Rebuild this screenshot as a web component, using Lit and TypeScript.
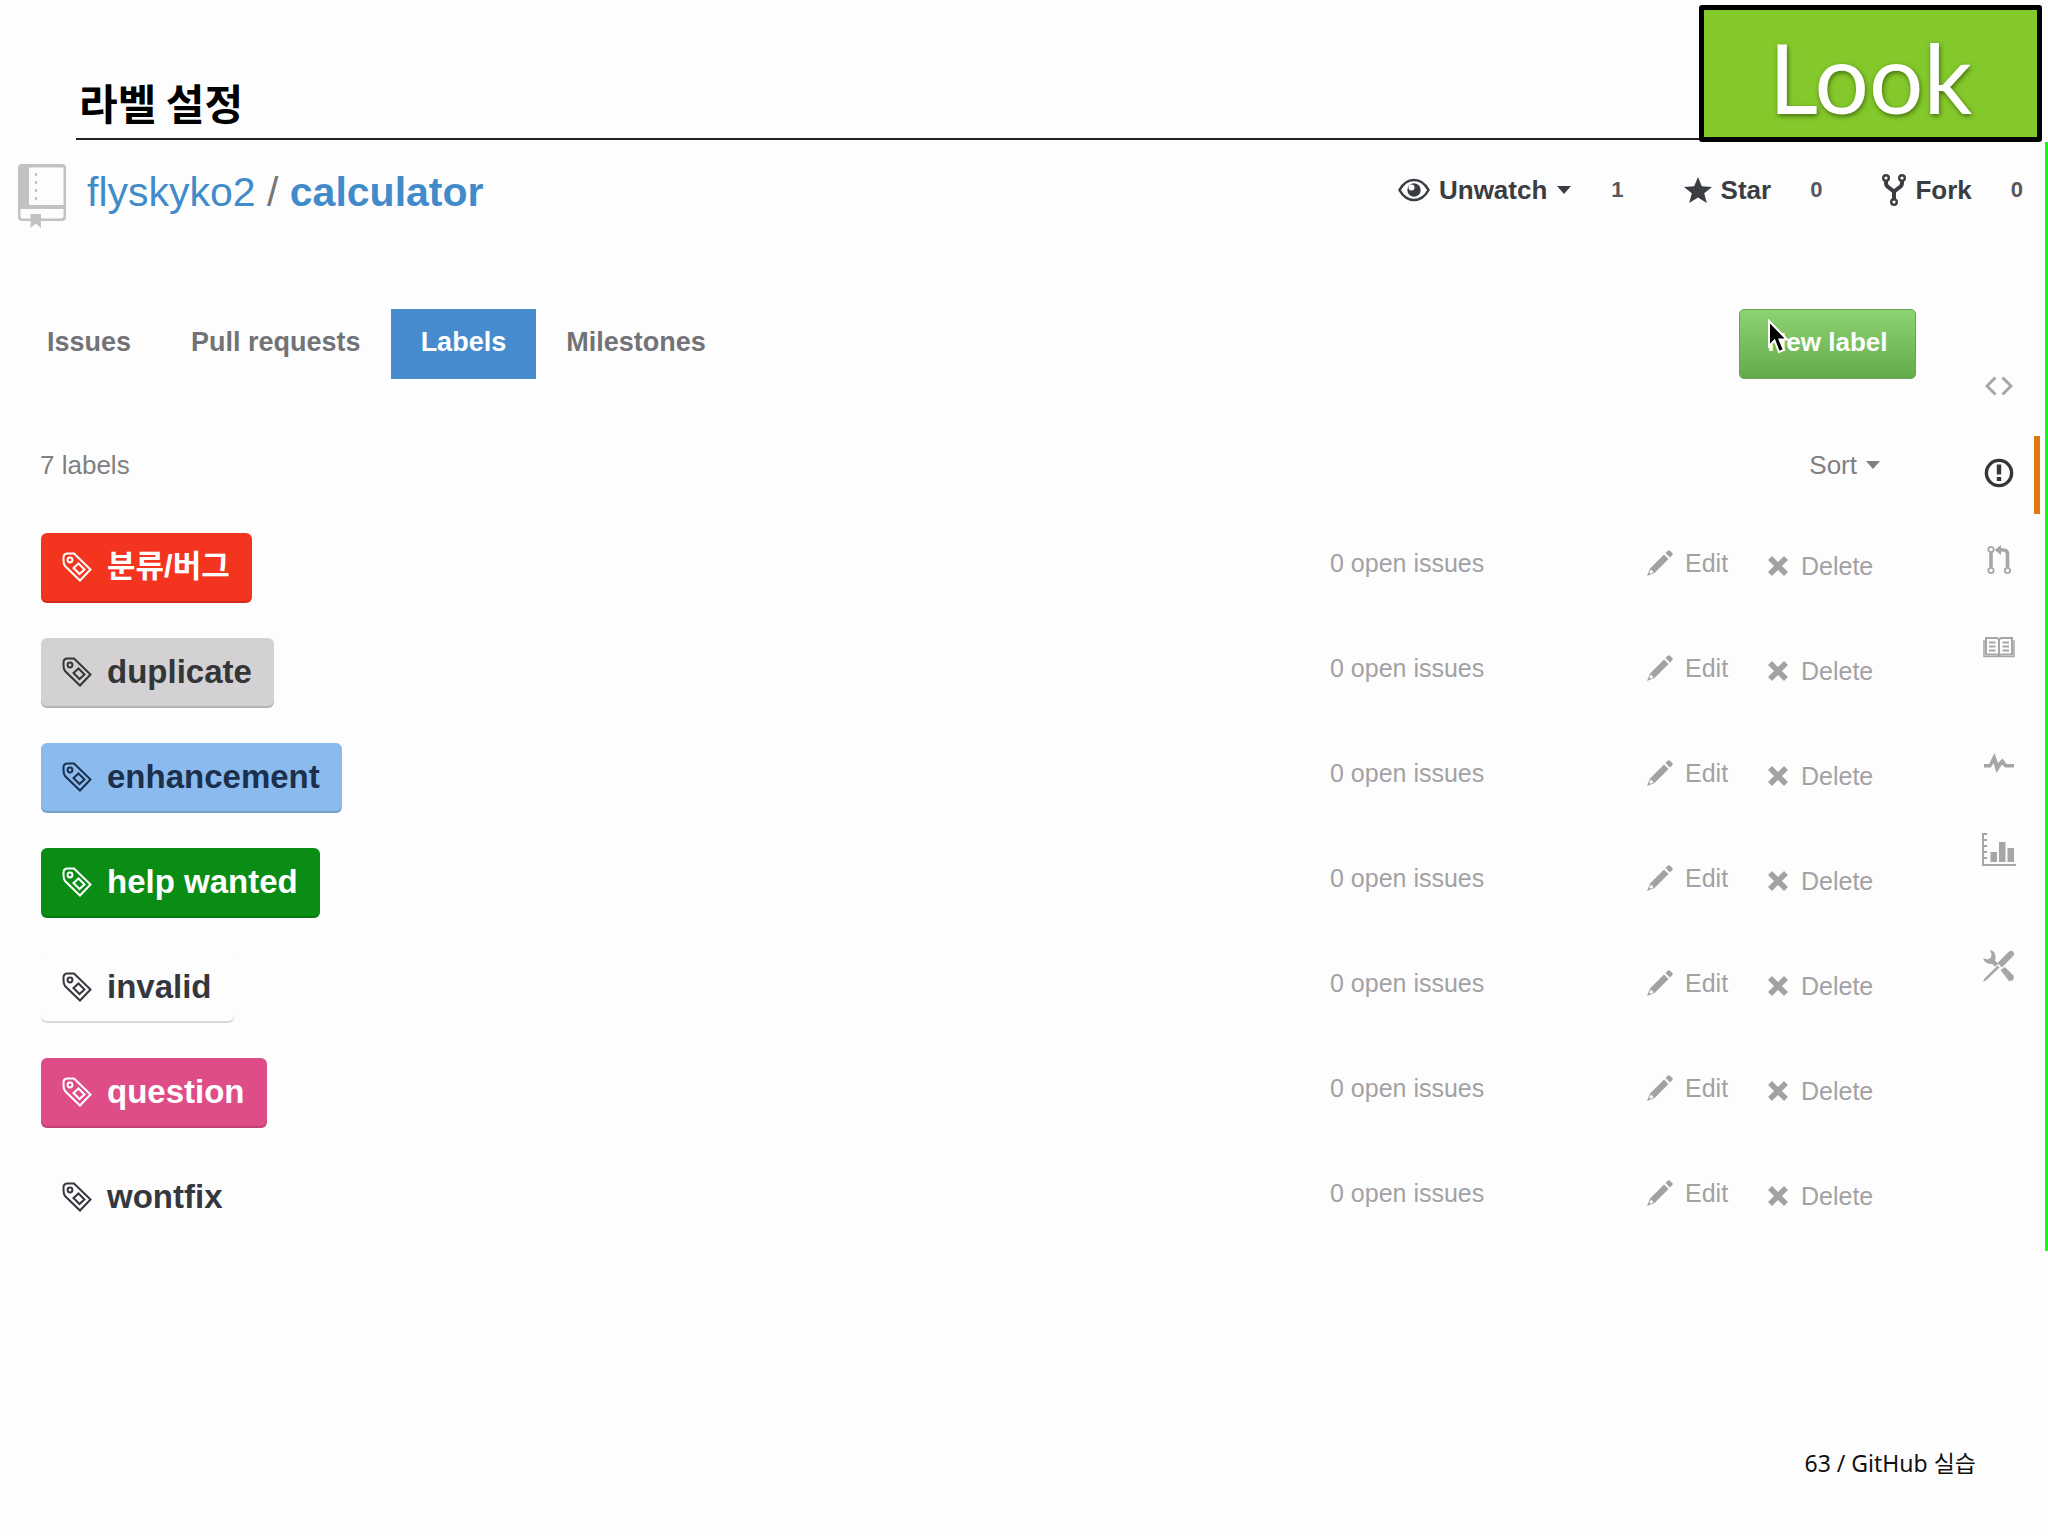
import { LitElement, html, css, svg } from "lit";
import { customElement, property } from "lit/decorators.js";
import { classMap } from "lit/directives/class-map.js";

interface Label {
  name: string;
  tone: string;
  open: number;
}

const LABELS: Label[] = [
  { name: "분류/버그", tone: "red", open: 0 },
  { name: "duplicate", tone: "gray", open: 0 },
  { name: "enhancement", tone: "blue", open: 0 },
  { name: "help wanted", tone: "green", open: 0 },
  { name: "invalid", tone: "plain", open: 0 },
  { name: "question", tone: "pink", open: 0 },
  { name: "wontfix", tone: "white", open: 0 },
];

const TABS = ["Issues", "Pull requests", "Labels", "Milestones"];

const ICONS: Record<string, { w: number; h: number; body: unknown }> = {
  repo: {
    w: 48, h: 66,
    body: svg`<path fill-rule="evenodd" fill="currentColor" d="M4 1H44Q48 1 48 5V54Q48 58 44 58H23V65L18 60.500L12.500 65V58H4Q0 58 0 54V5Q0 1 4 1ZM11 4.500V42H45.500V4.500ZM2.500 46V53Q2.500 55.500 5 55.500H12.500V51H23V55.500H43Q45.500 55.500 45.500 53V46Z"/>
      <path fill="currentColor" d="M17 10h2v3h-2zM17 18h2v3h-2zM17 26h2v3h-2zM17 34h2v3h-2z"/>`,
  },
  eye: {
    w: 32, h: 24,
    body: svg`<path d="M1.500 12C5 5.500 10 2 16 2S27 5.500 30.500 12C27 18.500 22 22 16 22S5 18.500 1.500 12Z" fill="none" stroke="currentColor" stroke-width="2.600"/>
      <circle cx="16" cy="12" r="6.700" fill="currentColor"/><circle cx="13.500" cy="9.500" r="3" fill="#fefdfe"/>`,
  },
  star: {
    w: 28, h: 26,
    body: svg`<path fill="currentColor" d="M14 0L17.800 9.300L28 10L20.200 16.300L22.800 26L14 20.600L5.200 26L7.800 16.300L0 10L10.200 9.300Z"/>`,
  },
  fork: {
    w: 24, h: 34,
    body: svg`<g fill="none" stroke="currentColor"><g stroke-width="2.400"><circle cx="4" cy="5" r="2.800"/><circle cx="20" cy="5" r="2.800"/><circle cx="12" cy="29" r="2.800"/></g>
      <path stroke-width="4" d="M4 7.500V10.500Q4 12 5.500 13.500L12 18.500L18.500 13.500Q20 12 20 10.500V7.500M12 17.500V26"/></g>`,
  },
  tag: {
    w: 30, h: 30,
    body: svg`<g fill="none" stroke="currentColor" stroke-width="2"><path d="M1.500 8V5.500Q1.500 2 5 1.500L12 1.500L28.500 17.500L18 28.500L3 14Q1.500 12 1.500 8Z"/>
      <circle cx="8" cy="8" r="2.400"/><path d="M16.500 11.500L22.500 17.500L17.500 22L11.500 16Z"/></g>`,
  },
  pencil: {
    w: 26, h: 26,
    body: svg`<path fill="currentColor" d="M17 4.500L21.500 9L7.500 23L0 26L3 18.500ZM18.500 3L21 .500Q22 -.300 23 .700L25.300 3Q26.300 4 25.300 5L23 7.500Z"/><path fill="#fefdfe" d="M4 19.500L6.700 22.200L3.500 23.700L2.300 22.500Z"/>`,
  },
  cross: {
    w: 20, h: 20,
    body: svg`<path stroke="currentColor" stroke-width="5.600" d="M2 2L18 18M18 2L2 18"/>`,
  },
  caret: { w: 16, h: 8, body: svg`<path fill="currentColor" d="M1 0H15L8 8Z"/>` },
  code: {
    w: 28, h: 20,
    body: svg`<path fill="none" stroke="currentColor" stroke-width="3" d="M10.500 1.500L2 10L10.500 18.500M17.500 1.500L26 10L17.500 18.500"/>`,
  },
  issue: {
    w: 30, h: 30,
    body: svg`<circle cx="15" cy="15" r="12.600" fill="none" stroke="currentColor" stroke-width="3.400"/><path fill="currentColor" d="M12.800 6.500h4.400v10h-4.400zM12.800 19h4.400v4h-4.400z"/>`,
  },
  pull: {
    w: 24, h: 30,
    body: svg`<g fill="none" stroke="currentColor"><g stroke-width="1.800"><circle cx="4" cy="4.500" r="2.700"/><circle cx="4" cy="25.500" r="2.700"/><circle cx="20.500" cy="25.500" r="2.700"/></g>
      <path stroke-width="3.600" d="M4 7.500V22.500M20.500 22.500V9Q20.500 5 16.500 5H13"/></g><path fill="currentColor" d="M7.500 5L14 0V10Z"/>`,
  },
  book: {
    w: 32, h: 22,
    body: svg`<g fill="none" stroke="currentColor"><path stroke-width="2" d="M3 2H14L16 3.500L18 2H29V18.500H18L16 20L14 18.500H3ZM16 3V20"/><path stroke-width="1.500" d="M1 4V20.500H31V4"/>
      <path stroke-width="2" d="M6 6.500H12.500M6 10.500H12.500M6 14.500H12.500M19.500 6.500H26M19.500 10.500H26M19.500 14.500H26"/></g>`,
  },
  pulse: {
    w: 30, h: 20,
    body: svg`<path fill="currentColor" d="M0 11H5L10.500 0L14 10L18.500 5.500L22.500 11H30V14.500H21L18 11.500L12.500 20L9.500 10L7 14.500H0Z"/>`,
  },
  graph: {
    w: 34, h: 34,
    body: svg`<path fill="currentColor" d="M0 0H5V2H2V6H5V8H2V12H5V14H2V18H5V20H2V24H5V26H2V31H34V33H0ZM8.500 19h6.500v10h-6.500zM17 9h6.500v20h-6.500zM25.500 15h6.500v14h-6.500z"/>`,
  },
  tools: {
    w: 32, h: 32,
    body: svg`<path fill="currentColor" d="M7 0Q12.500 1 12.500 7Q12.500 9 12 10.500L15.500 14L11.500 16.500L9.500 14Q2 14.500 0 8L5 9.500L8 7.500L8.500 4ZM17.500 20L22 17L30.500 25.500Q31.500 27.500 30 30Q27.500 31.500 25.500 30.500Z"/>
      <path fill="currentColor" d="M26 1.500Q28 0 30 1.500Q31.800 3.500 30.500 5.500L19 17.500L14.500 13ZM14.500 15.500L16.500 17.500L3.500 30L0 32L1.500 28.500Z"/>`,
  },
  pointer: {
    w: 22, h: 36,
    body: svg`<path fill="#000" stroke="#fff" stroke-width="2" d="M2 2V27L7.500 21.500L12 33L17 31L12.500 20.500H20Z"/>`,
  },
};

@customElement("app-icon")
export class AppIcon extends LitElement {
  @property() name = "";

  static styles = css`
    :host { display: inline-flex; flex: none; }
    svg { display: block; }
  `;

  render() {
    const icon = ICONS[this.name];
    if (!icon) return html``;
    return html`<svg width=${icon.w} height=${icon.h} viewBox="0 0 ${icon.w} ${icon.h}" aria-hidden="true">${icon.body}</svg>`;
  }
}

@customElement("label-row")
export class LabelRow extends LitElement {
  @property({ attribute: false }) label!: Label;

  static styles = css`
    :host {
      display: grid;
      grid-template-columns: 1fr 317px 121px 102px;
      align-items: start;
      font: 25px/30px "Liberation Sans", Arial, sans-serif;
      color: #a2a2a4;
    }
    .chip {
      justify-self: start;
      display: flex;
      align-items: center;
      gap: 15px;
      height: 70px;
      box-sizing: border-box;
      padding: 0 22px 2px 21px;
      border-radius: 6px;
      box-shadow: inset 0 -2px 0 rgba(0, 0, 0, 0.14);
      font: bold 33px/40px "Liberation Sans", "Noto Sans CJK KR", sans-serif;
      text-decoration: none;
      color: #34383e;
    }
    .red, .green, .pink { color: #fff; }
    .red { background: #f33520; font-size: 31px; }
    .gray { background: #d3d1d3; color: #333537; }
    .blue { background: #8abaee; color: #1c2f4c; }
    .green { background: #0a8d14; }
    .pink { background: #df4d88; }
    .white { box-shadow: none; }
    .count, .action { margin-top: 15px; color: inherit; text-decoration: none; }
    .action {
      display: flex;
      align-items: center;
      padding: 0;
      border: 0;
      background: none;
      font: inherit;
      cursor: pointer;
    }
    .edit { gap: 12px; }
    .delete { gap: 13px; margin-top: 18px; }
  `;

  render() {
    const { name, tone, open } = this.label;
    return html`
      <a class=${classMap({ chip: true, [tone]: true })} href="#"><app-icon name="tag"></app-icon><span>${name}</span></a>
      <a class="count" href="#">${open} open issues</a>
      <button class="action edit"><app-icon name="pencil"></app-icon>Edit</button>
      <button class="action delete"><app-icon name="cross"></app-icon>Delete</button>
    `;
  }
}

@customElement("app-root")
export class AppRoot extends LitElement {
  static styles = css`
    :host {
      display: block;
      min-height: 100vh;
      background: #fefdfe;
      color: #3a3d42;
      font-family: "Liberation Sans", Arial, "Noto Sans CJK KR", sans-serif;
    }
    a { color: inherit; text-decoration: none; }
    button { font: inherit; color: inherit; border: 0; padding: 0; background: none; cursor: pointer; }
    .page { display: flex; flex-direction: column; min-height: 100vh; }
    .top { display: flex; align-items: flex-end; padding: 5px 6px 0 76px; }
    .heading {
      flex: 1;
      margin: 0 0 2px;
      padding: 0 0 6px 3px;
      border-bottom: 2px solid #222;
      font: bold 42px/60px "Noto Sans CJK KR", sans-serif;
      color: #000;
    }
    .look {
      box-sizing: border-box;
      width: 343px;
      height: 137px;
      border: 5px solid #000;
      border-radius: 3px;
      background: #84c92b;
      color: #fff;
      font: 96px/134px Lato, sans-serif;
      text-align: center;
      text-shadow: 1px 2px 5px rgba(40, 70, 0, 0.7);
    }
    .shot {
      display: grid;
      grid-template-columns: 1fr 97px;
      grid-template-rows: 167px auto;
      padding-bottom: 18px;
      border-right: 3px solid #10fb18;
    }
    .repo { grid-column: 1 / -1; display: flex; align-items: flex-start; padding: 21px 22px 0 18px; }
    .book { color: #c2c2c3; }
    .path { flex: 1; margin: 3px 0 0 21px; font-size: 41px; line-height: 52px; font-weight: normal; color: #777; }
    .path a { color: #428bca; }
    .path .name { font-weight: bold; }
    .social { display: flex; gap: 60px; padding-top: 9px; }
    .pair { display: flex; align-items: center; height: 36px; }
    .act { display: flex; align-items: center; gap: 9px; font-weight: bold; font-size: 26px; line-height: 36px; }
    .num { margin-left: 39px; font-size: 22px; line-height: 32px; font-weight: bold; color: #55585c; }
    .main { padding-left: 17px; }
    .tabs { display: flex; align-items: center; margin-right: 32px; }
    .tab { padding: 0 30px; font-weight: bold; font-size: 27px; line-height: 66px; height: 70px; color: #727376; }
    .current { background: #458bcd; color: #fff; }
    .new {
      position: relative;
      width: 177px;
      height: 70px;
      margin-left: auto;
      padding: 0 0 4px;
      border: 1px solid #6ba356;
      border-radius: 5px;
      background: linear-gradient(#8dd372, #65aa4b);
      color: #fff;
      font-weight: bold;
      font-size: 26px;
    }
    .pointer { position: absolute; left: 27px; top: 9px; }
    .summary {
      display: flex;
      justify-content: space-between;
      padding: 71px 67px 0 23px;
      font-size: 26px;
      line-height: 30px;
      color: #808083;
    }
    .sort { display: flex; align-items: center; gap: 8px; }
    .list { display: grid; gap: 35px; margin: 53px 78px 0 24px; }
    .rail { display: flex; flex-direction: column; margin-right: 5px; padding-top: 40px; color: #a6a6a8; }
    .side {
      display: flex;
      align-items: center;
      justify-content: center;
      box-sizing: border-box;
      height: 78px;
      margin-bottom: 9px;
      padding: 0 0 5px 10px;
    }
    .active { color: #34363a; border-right: 6px solid #df7a12; padding-left: 16px; }
    .last { margin-bottom: 38px; }
    .foot { margin-top: auto; padding: 0 72px 57px; text-align: right; font: 23px/32px "Noto Sans", "Noto Sans CJK KR", sans-serif; color: #111; }
  `;

  private side(name: string, title: string, kind = "") {
    return html`<a class=${classMap({ side: true, active: kind === "active", last: kind === "last" })} href="#" aria-label=${title}><app-icon name=${name}></app-icon></a>`;
  }

  render() {
    return html`
      <div class="page">
        <header class="top">
          <h1 class="heading">라벨 설정</h1>
          <div class="look">Look</div>
        </header>
        <section class="shot">
          <div class="repo">
            <app-icon class="book" name="repo"></app-icon>
            <h2 class="path"><a href="#">flyskyko2</a> / <a class="name" href="#">calculator</a></h2>
            <div class="social">
              <div class="pair"><button class="act"><app-icon name="eye"></app-icon>Unwatch<app-icon name="caret"></app-icon></button><a class="num" href="#">1</a></div>
              <div class="pair"><button class="act"><app-icon name="star"></app-icon>Star</button><a class="num" href="#">0</a></div>
              <div class="pair"><button class="act"><app-icon name="fork"></app-icon>Fork</button><a class="num" href="#">0</a></div>
            </div>
          </div>
          <main class="main">
            <nav class="tabs">
              ${TABS.map((t) => html`<a class=${classMap({ tab: true, current: t === "Labels" })} href="#">${t}</a>`)}
              <button class="new">New label<app-icon class="pointer" name="pointer"></app-icon></button>
            </nav>
            <div class="summary">
              <span>${LABELS.length} labels</span>
              <button class="sort">Sort<app-icon name="caret"></app-icon></button>
            </div>
            <div class="list">${LABELS.map((l) => html`<label-row .label=${l}></label-row>`)}</div>
          </main>
          <nav class="rail">
            ${this.side("code", "Code")}
            ${this.side("issue", "Issues", "active")}
            ${this.side("pull", "Pull requests")}
            ${this.side("book", "Wiki", "last")}
            ${this.side("pulse", "Pulse")}
            ${this.side("graph", "Graphs", "last")}
            ${this.side("tools", "Settings")}
          </nav>
        </section>
        <footer class="foot">63 / GitHub 실습</footer>
      </div>
    `;
  }
}
